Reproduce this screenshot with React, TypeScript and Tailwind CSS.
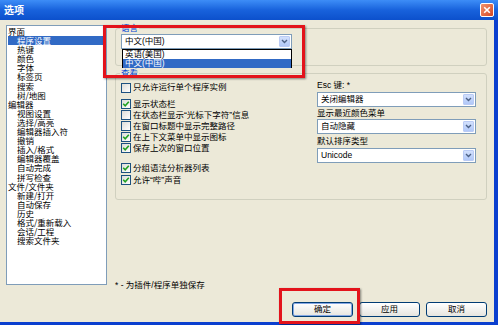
import React from 'react';

const tree: [string, number][] = [
  ['界面', 0], ['程序设置', 1], ['热键', 1], ['颜色', 1], ['字体', 1], ['标签页', 1], ['搜索', 1], ['树/地图', 1],
  ['编辑器', 0], ['视图设置', 1], ['选择/高亮', 1], ['编辑器插入符', 1], ['撤销', 1], ['插入/格式', 1], ['编辑器覆盖', 1],
  ['自动完成', 1], ['拼写检查', 1],
  ['文件/文件夹', 0], ['新建/打开', 1], ['自动保存', 1], ['历史', 1], ['格式/重新载入', 1], ['会话/工程', 1], ['搜索文件夹', 1],
];

function Check({ on, label, className = '' }: { on?: boolean; label: string; className?: string }) {
  return (
    <div className={`flex items-center gap-[2px] h-[11px] ${className}`}>
      <span className="w-[10px] h-[10px] shrink-0 border border-[#1c5180] bg-linear-to-br from-[#dcdcd7] to-white flex items-center justify-center">
        {on && (
          <svg width="8" height="8" viewBox="0 0 8 8">
            <path d="M1.2 3.8L3.2 5.8L6.8 1.8" stroke="#21a121" strokeWidth="1.6" fill="none" />
          </svg>
        )}
      </span>
      <span className="whitespace-nowrap">{label}</span>
    </div>
  );
}

function Combo({ value, className = '' }: { value: string; className?: string }) {
  return (
    <div className={`flex items-center h-[15px] bg-white border border-[#7f9db9] ${className}`}>
      <span className="flex-1 pl-[3px] whitespace-nowrap overflow-hidden">{value}</span>
      <span className="w-[11px] h-[11px] mr-[1px] rounded-[1px] bg-linear-to-b from-[#d2e0fc] to-[#b1c8f8] border border-[#bacbf5] flex items-center justify-center">
        <svg width="7" height="5" viewBox="0 0 7 5">
          <path d="M1 1L3.5 3.5L6 1" stroke="#4d6185" strokeWidth="1.4" fill="none" />
        </svg>
      </span>
    </div>
  );
}

function Btn({ label, focus }: { label: string; focus?: boolean }) {
  return (
    <button
      className={`w-[61px] h-[15px] rounded-[3px] border border-[#003c74] bg-linear-to-b from-white to-[#e6e5df] flex items-center justify-center ${
        focus ? 'shadow-[inset_0_0_0_1px_#84a7e4]' : ''
      }`}
    >
      {label}
    </button>
  );
}

export default function App() {
  return (
    <div className="relative w-[498px] h-[325px] flex flex-col overflow-hidden bg-white text-[8.5px] leading-[9px] text-black font-['Liberation_Sans','Noto_Sans_CJK_SC',sans-serif]">
      {/* Title bar */}
      <div className="h-[20px] shrink-0 flex items-center pl-[4px] pr-[4px] bg-linear-to-b from-[#3d8df7] via-[#1862dc] to-[#0c50cc]">
        <span className="flex-1 text-white font-bold text-[10px] leading-[12px] font-['Noto_Sans_CJK_SC',sans-serif]">选项</span>
        <span className="w-[14px] h-[14px] rounded-[2px] border border-white bg-linear-to-br from-[#f0926e] to-[#d3451f] flex items-center justify-center">
          <svg width="8" height="8" viewBox="0 0 8 8">
            <path d="M1.2 1.2L6.8 6.8M6.8 1.2L1.2 6.8" stroke="white" strokeWidth="1.6" />
          </svg>
        </span>
      </div>

      {/* Body */}
      <div className="flex-1 flex bg-[#ece9d8] border-r-[4px] border-b-[3px] border-[#0a3fcf]">
        {/* Tree */}
        <div className="ml-[6px] mt-[5px] w-[101px] h-[260px] bg-white border border-[#7f9db9] pt-[1px] px-[1px] leading-[9.1px] font-['Noto_Sans_CJK_SC',sans-serif]">
          {tree.map(([t, lvl], i) => (
            <div
              key={i}
              className={`h-[9.1px] whitespace-nowrap ${lvl ? 'pl-[9px]' : 'pl-0'} ${i === 1 ? 'bg-[#316ac5] text-white' : ''}`}
            >
              {t}
            </div>
          ))}
        </div>

        {/* Right area */}
        <div className="ml-[8px] pt-[4px] w-[372px] flex flex-col">
          <fieldset className="h-[42px] border border-[#d0d0bf] rounded-[3px]">
            <legend className="ml-[4px] px-[1px] text-[#0046d5] leading-[9px]">语言</legend>
            <Combo value="中文(中国)" className="mt-[1px] ml-[5px] w-[171px]" />
          </fieldset>

          <fieldset className="mt-[3px] h-[131px] border border-[#d0d0bf] rounded-[3px] flex">
            <legend className="ml-[4px] px-[1px] text-[#0046d5] leading-[9px]">查看</legend>
            <div className="flex">
              <div className="pl-[5px] w-[201px] flex flex-col">
                <Check label="只允许运行单个程序实例" className="mt-[4px]" />
                <Check on label="显示状态栏" className="mt-[5.5px]" />
                <Check label="在状态栏显示“光标下字符”信息" />
                <Check label="在窗口标题中显示完整路径" />
                <Check on label="在上下文菜单中显示图标" />
                <Check on label="保存上次的窗口位置" />
                <Check on label="分组语法分析器列表" className="mt-[9px]" />
                <Check on label="允许“哔”声音" className="mt-[1px]" />
              </div>
              <div className="w-[159px] flex flex-col">
                <div className="mt-[2.5px] h-[9px]">Esc 键: *</div>
                <Combo value="关闭编辑器" className="mt-[2.5px]" />
                <div className="mt-[1.5px] h-[9px]">显示最近颜色菜单</div>
                <Combo value="自动隐藏" className="mt-[1.5px]" />
                <div className="mt-[2.5px] h-[9px]">默认排序类型</div>
                <Combo value="Unicode" className="mt-[2.5px]" />
              </div>
            </div>
          </fieldset>

          <div className="mt-[81px] h-[9px]">* - 为插件/程序单独保存</div>

          <div className="mt-[12px] flex justify-end gap-[6px]">
            <Btn label="确定" focus />
            <Btn label="应用" />
            <Btn label="取消" />
          </div>
        </div>
      </div>

      {/* Open dropdown list */}
      <div className="absolute left-[122px] top-[49px] w-[170px] h-[19px] bg-white border border-black flex flex-col">
        <div className="h-[8.5px] pl-[2px] leading-[8.5px]">英语(美国)</div>
        <div className="flex-1 pl-[2px] bg-[#316ac5] text-white leading-[9px]">中文(中国)</div>
      </div>

      {/* Red highlight boxes */}
      <div className="absolute left-[103px] top-[25px] w-[202px] h-[53px] border-[3px] border-[#e3131b] shadow-[1px_1px_2px_rgba(0,0,0,0.45)]" />
      <div className="absolute left-[279px] top-[288px] w-[81px] h-[36px] border-[3px] border-[#e3131b] shadow-[1px_1px_2px_rgba(0,0,0,0.45)]" />
    </div>
  );
}
